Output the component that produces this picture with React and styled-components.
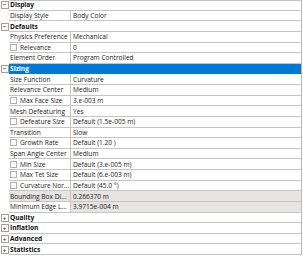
import React from "react";
import styled, { createGlobalStyle } from "styled-components";

const GlobalStyle = createGlobalStyle`
  body {
    margin: 0;
    background: #ffffff;
    font-family: "Open Sans", "Liberation Sans", sans-serif;
  }
`;

const ROW_H = "10.625px";

const rows = [
  { cat: "Display", open: true },
  { name: "Display Style", value: "Body Color" },
  { cat: "Defaults", open: true },
  { name: "Physics Preference", value: "Mechanical" },
  { name: "Relevance", value: "0", check: true },
  { name: "Element Order", value: "Program Controlled" },
  { cat: "Sizing", open: true, selected: true },
  { name: "Size Function", value: "Curvature" },
  { name: "Relevance Center", value: "Medium" },
  { name: "Max Face Size", value: "3.e-003 m", check: true },
  { name: "Mesh Defeaturing", value: "Yes" },
  { name: "Defeature Size", value: "Default (1.5e-005 m)", check: true },
  { name: "Transition", value: "Slow" },
  { name: "Growth Rate", value: "Default (1.20 )", check: true },
  { name: "Span Angle Center", value: "Medium" },
  { name: "Min Size", value: "Default (3.e-005 m)", check: true },
  { name: "Max Tet Size", value: "Default (6.e-003 m)", check: true },
  { name: "Curvature Nor...", value: "Default (45.0 °)", check: true },
  { name: "Bounding Box Di...", value: "0.266370 m", readOnly: true, greyName: true },
  { name: "Minimum Edge L...", value: "3.9715e-004 m", readOnly: true },
  { cat: "Quality" },
  { cat: "Inflation" },
  { cat: "Advanced" },
  { cat: "Statistics" },
];

function Details() {
  return (
    <Panel>
      {rows.map((r, i) =>
        r.cat ? (
          <Row key={i}>
            <Gutter>
              <Toggle>{r.open ? "−" : "+"}</Toggle>
            </Gutter>
            <CatCell $selected={r.selected}>{r.cat}</CatCell>
          </Row>
        ) : (
          <Row key={i}>
            <Gutter />
            <NameCell $grey={r.greyName}>
              {r.check && <Check />}
              <span>{r.name}</span>
            </NameCell>
            <ValueCell $grey={r.readOnly}>{r.value}</ValueCell>
          </Row>
        )
      )}
    </Panel>
  );
}

export default function App() {
  return (
    <>
      <GlobalStyle />
      <Details />
    </>
  );
}

const Panel = styled.div`
  width: 302px;
  font-size: 6.6px;
  color: #1a1a1a;
`;

const Row = styled.div`
  display: flex;
  height: ${ROW_H};
  &:first-child > div:not(:first-child) {
    box-shadow: inset 0 1px 0 #c4c4c4;
  }
`;

const Gutter = styled.div`
  width: 9px;
  flex: none;
  display: flex;
  align-items: center;
  justify-content: center;
`;

const Toggle = styled.div`
  width: 6px;
  height: 6px;
  border: 1px solid #a0a0a0;
  background: #ffffff;
  color: #404040;
  font-family: "Liberation Sans", sans-serif;
  font-size: 6px;
  font-weight: bold;
  line-height: 6px;
  text-align: center;
`;

const Cell = styled.div`
  box-sizing: border-box;
  height: 100%;
  display: flex;
  align-items: center;
  border-bottom: 1px solid #c4c4c4;
  white-space: nowrap;
`;

const CatCell = styled(Cell)`
  flex: 1;
  padding-left: 1px;
  font-weight: bold;
  background: ${(p) => (p.$selected ? "#0078d7" : "#ffffff")};
  color: ${(p) => (p.$selected ? "#ffffff" : "#111111")};
  border-right: 1px solid #b8b8b8;
  border-bottom-color: ${(p) => (p.$selected ? "#0078d7" : "#c4c4c4")};
`;

const NameCell = styled(Cell)`
  width: 62px;
  flex: none;
  padding-left: 1px;
  border-right: 1px solid #c4c4c4;
  background: ${(p) => (p.$grey ? "#e6e5e1" : "#ffffff")};
`;

const Check = styled.span`
  flex: none;
  box-sizing: border-box;
  width: 7px;
  height: 7px;
  margin-right: 3px;
  border: 1px solid #b0b0b0;
  background: #ffffff;
`;

const ValueCell = styled(Cell)`
  flex: 1;
  padding-left: 2px;
  border-right: 1px solid #b8b8b8;
  background: ${(p) => (p.$grey ? "#e6e5e1" : "#ffffff")};
`;
